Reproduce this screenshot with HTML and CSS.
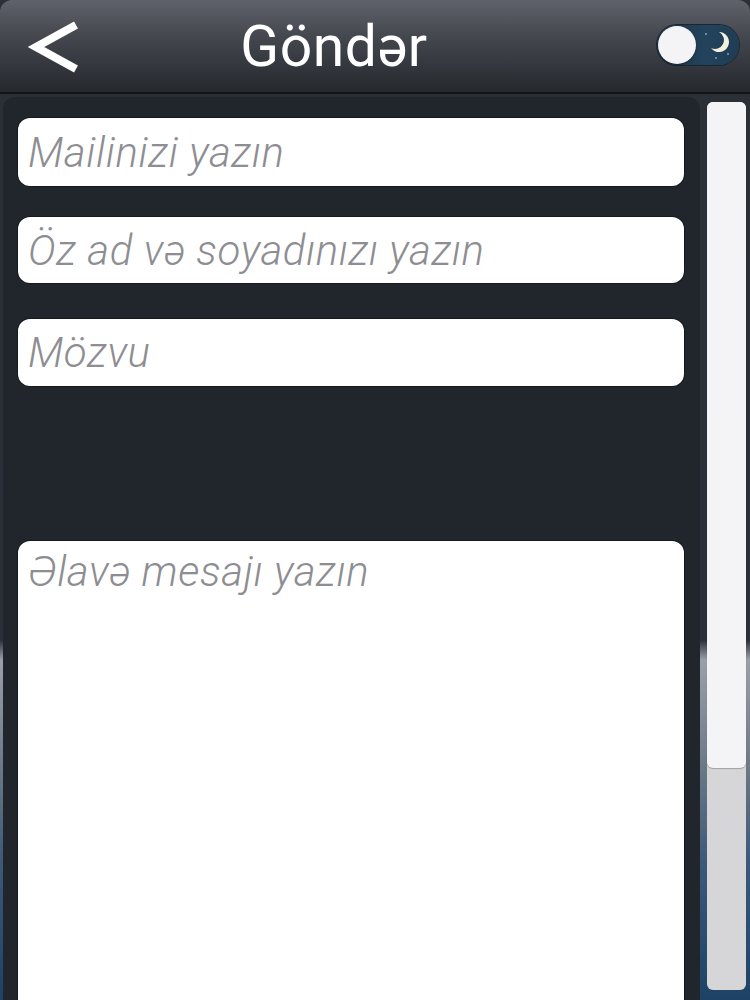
FILE: index.html
```html
<!DOCTYPE html>
<html lang="az">
<head>
<meta charset="utf-8">
<title>Göndər</title>
<link rel="stylesheet" href="styles.css">
</head>
<body>
<div class="app">
  <header class="topbar">
    <div class="back">
      <svg width="56" height="52" viewBox="0 0 56 52"><polyline points="50,4 10,26 50,48" fill="none" stroke="#ffffff" stroke-width="8" stroke-linejoin="miter"/></svg>
    </div>
    <h1 class="title">Göndər</h1>
    <div class="toggle-wrap">
      <div class="toggle">
        <span class="star s1"></span><span class="star s2"></span><span class="star s3"></span>
        <svg class="moon" width="20" height="22" viewBox="0 0 20 22"><path d="M9 1 A10 10 0 1 1 1 17 A8 8 0 0 0 9 1 Z" fill="#f3f1dc"/></svg>
        <span class="knob"></span>
      </div>
    </div>
  </header>
  <div class="main">
    <div class="panel">
      <input class="field f1" type="text" placeholder="Mailinizi yazın">
      <input class="field f2" type="text" placeholder="Öz ad və soyadınızı yazın">
      <input class="field f3" type="text" placeholder="Mözvu">
      <textarea class="message" placeholder="Əlavə mesajı yazın"></textarea>
    </div>
    <div class="scroll">
      <div class="thumb"></div>
    </div>
  </div>
</div>
</body>
</html>
```

FILE: styles.css
```css
html, body {
  margin: 0;
  padding: 0;
}
body {
  width: 750px;
  height: 1000px;
  overflow: hidden;
  background: linear-gradient(to bottom, #2b2f36 0px, #2b3038 640px, #9aa0a8 660px, #6f7b88 760px, #3d5a78 860px, #1d4266 1000px);
  font-family: Roboto, "Noto Sans", sans-serif;
}
.app {
  display: flex;
  flex-direction: column;
  height: 1000px;
}
.topbar {
  height: 92px;
  flex: none;
  display: grid;
  grid-template-columns: 100px 1fr 110px;
  align-items: center;
  background: linear-gradient(to bottom, #5f626a 0%, #44474e 40%, #25292e 100%);
  border-radius: 12px 12px 0 0;
  border-bottom: 2px solid #121417;
}
.back {
  padding-left: 26px;
  padding-top: 2px;
  display: flex;
  align-items: center;
}
.title {
  margin: 0;
  padding-right: 72px;
  text-align: center;
  color: #ffffff;
  font-weight: 400;
  font-size: 57px;
  line-height: 1;
  letter-spacing: 0.5px;
}
.toggle-wrap {
  display: flex;
  align-items: center;
  padding-left: 17px;
  padding-bottom: 3px;
}
.toggle {
  position: relative;
  width: 82px;
  height: 40px;
  border-radius: 20px;
  background: linear-gradient(to right, #1b3247, #23435c 60%, #1f3d55);
  box-shadow: 0 0 0 1px #1a2733;
}
.knob {
  position: absolute;
  left: 1px;
  top: 1px;
  width: 38px;
  height: 38px;
  border-radius: 50%;
  background: #f4f4f6;
  box-shadow: 0 1px 2px rgba(0,0,0,0.4);
}
.moon {
  position: absolute;
  left: 53px;
  top: 6px;
}
.star {
  position: absolute;
  width: 2px;
  height: 2px;
  border-radius: 50%;
  background: rgba(200,220,240,0.6);
}
.s1 { left: 48px; top: 8px; }
.s2 { left: 70px; top: 28px; }
.s3 { left: 58px; top: 32px; }
.main {
  flex: 1;
  display: flex;
  padding-top: 3px;
  min-height: 0;
}
.panel {
  box-sizing: border-box;
  width: 697px;
  margin-left: 3px;
  padding: 21px 16px 0 15px;
  background: #20262b;
  border-radius: 12px 12px 0 0;
  display: flex;
  flex-direction: column;
  overflow: hidden;
  flex: none;
}
.field, .message {
  box-sizing: border-box;
  width: 666px;
  border: none;
  outline: none;
  background: #ffffff;
  border-radius: 12px;
  box-shadow: 0 0 0 1px #15191c;
  font-family: Roboto, "Noto Sans", sans-serif;
  font-style: italic;
  font-weight: 300;
  font-size: 42px;
  letter-spacing: 0.6px;
  color: #333;
  padding: 0 10px;
  margin: 0;
  flex: none;
}
.field::placeholder, .message::placeholder {
  color: #8d8d92;
  opacity: 1;
}
.f1 { height: 68px; }
.f2 { height: 66px; margin-top: 31px; }
.f3 { height: 67px; margin-top: 36px; }
.message {
  margin-top: 155px;
  height: 520px;
  padding-top: 6px;
  resize: none;
  line-height: 50px;
}
.scroll {
  width: 39px;
  margin: 5px 0 10px 7px;
  background: #d6d6d8;
  border-radius: 6px;
  display: flex;
  flex-direction: column;
  flex: none;
}
.thumb {
  height: 666px;
  background: #f4f4f6;
  border-radius: 6px;
  box-shadow: 0 1px 1px rgba(0,0,0,0.25);
}
```
